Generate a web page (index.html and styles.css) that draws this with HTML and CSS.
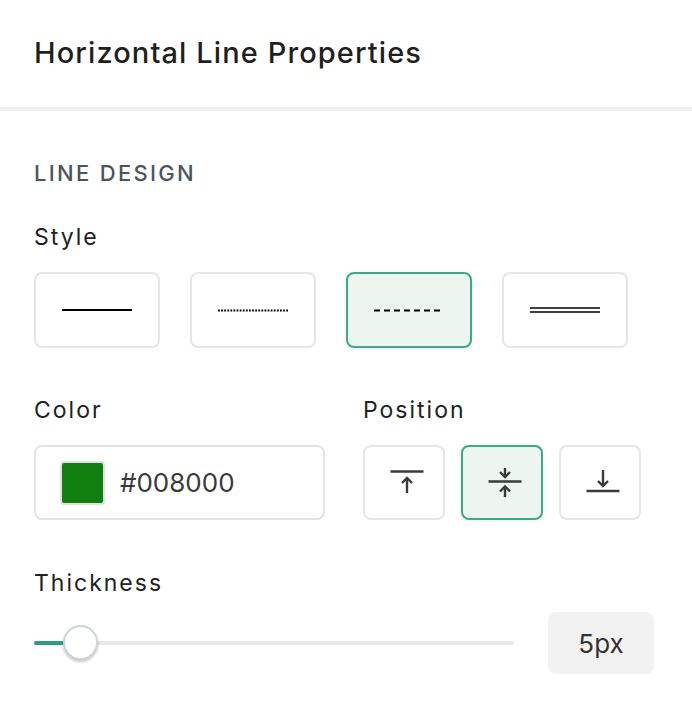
FILE: index.html
```html
<!DOCTYPE html>
<html lang="en">
<head>
<meta charset="utf-8">
<title>Horizontal Line Properties</title>
<link rel="stylesheet" href="styles.css">
</head>
<body>
<div class="panel">
  <header class="panel-header">
    <h1 class="panel-title">Horizontal Line Properties</h1>
  </header>
  <section class="panel-body">
    <h2 class="section-title">LINE DESIGN</h2>

    <div class="field field-style">
      <div class="label">Style</div>
      <div class="style-options">
        <button class="opt style-opt" aria-label="Solid">
          <svg width="70" height="8" viewBox="0 0 70 8"><line x1="0" y1="3" x2="70" y2="3" stroke="#000" stroke-width="2"/></svg>
        </button>
        <button class="opt style-opt" aria-label="Dotted">
          <svg width="70" height="8" viewBox="0 0 70 8"><line x1="0" y1="3.5" x2="70" y2="3.5" stroke="#000" stroke-width="2" stroke-dasharray="1.8 1.3"/></svg>
        </button>
        <button class="opt style-opt is-active" aria-label="Dashed">
          <svg width="70" height="8" viewBox="0 0 70 8"><line x1="0" y1="3.5" x2="70" y2="3.5" stroke="#000" stroke-width="2" stroke-dasharray="6 4"/></svg>
        </button>
        <button class="opt style-opt" aria-label="Double">
          <svg width="70" height="8" viewBox="0 0 70 8"><line x1="0" y1="1" x2="70" y2="1" stroke="#000" stroke-width="1.7"/><line x1="0" y1="5" x2="70" y2="5" stroke="#000" stroke-width="1.7"/></svg>
        </button>
      </div>
    </div>

    <div class="field-row">
      <div class="field">
        <div class="label">Color</div>
        <div class="color-input">
          <span class="swatch"></span>
          <span class="color-value">#008000</span>
        </div>
      </div>
      <div class="field">
        <div class="label">Position</div>
        <div class="pos-options">
          <button class="opt pos-opt" aria-label="Top">
            <svg width="40" height="40" viewBox="0 0 40 40" fill="none" stroke="#3a3a3a" stroke-width="2.4" stroke-linecap="butt">
              <path d="M3.5 8.5H36.5"/>
              <path d="M20 15V30"/>
              <path d="M15 20L20 15L25 20"/>
            </svg>
          </button>
          <button class="opt pos-opt is-active" aria-label="Middle">
            <svg width="40" height="40" viewBox="0 0 40 40" fill="none" stroke="#3a3a3a" stroke-width="2.4" stroke-linecap="butt">
              <path d="M20 5V14"/>
              <path d="M15 9L20 14L25 9"/>
              <path d="M3.5 18.5H36.5"/>
              <path d="M20 23.5V34"/>
              <path d="M15 28.5L20 23.5L25 28.5"/>
            </svg>
          </button>
          <button class="opt pos-opt" aria-label="Bottom">
            <svg width="40" height="40" viewBox="0 0 40 40" fill="none" stroke="#3a3a3a" stroke-width="2.4" stroke-linecap="butt">
              <path d="M20 7V23"/>
              <path d="M15 18L20 23L25 18"/>
              <path d="M3.5 28H36.5"/>
            </svg>
          </button>
        </div>
      </div>
    </div>

    <div class="field field-thickness">
      <div class="label">Thickness</div>
      <div class="slider-row">
        <div class="slider">
          <div class="slider-track"><div class="slider-fill"></div></div>
          <div class="slider-thumb"></div>
        </div>
        <div class="value-box">5px</div>
      </div>
    </div>
  </section>
</div>
</body>
</html>
```

FILE: styles.css
```css
* { box-sizing: border-box; }

html, body {
  margin: 0;
  padding: 0;
  background: #fff;
}

body {
  font-family: Inter, "Noto Sans", "Liberation Sans", sans-serif;
  color: #222;
}

.panel {
  width: 692px;
}

.panel-header {
  padding: 36px 34px 37px;
  border-bottom: 4px solid #efefef;
}

.panel-title {
  margin: 0;
  font-size: 29px;
  line-height: 34px;
  font-weight: 500;
  letter-spacing: 1.1px;
  color: #1f1f1f;
}

.panel-body {
  padding: 49px 38px 0 34px;
}

.section-title {
  margin: 0;
  font-size: 22px;
  line-height: 26px;
  font-weight: 500;
  letter-spacing: 2.3px;
  color: #4b5560;
}

.label {
  font-size: 23px;
  line-height: 26px;
  font-weight: 400;
  letter-spacing: 2px;
  color: #222;
}

.field-style {
  margin-top: 38px;
}

.field-style .label {
  margin-bottom: 22px;
}

.style-options {
  display: flex;
  gap: 30px;
}

.opt {
  display: flex;
  align-items: center;
  justify-content: center;
  padding: 0;
  margin: 0;
  background: #fff;
  border: 2px solid #e6e6e6;
  border-radius: 8px;
  cursor: pointer;
}

.opt svg { display: block; }

.opt.is-active {
  background: #ecf5f0;
  border-color: #3ea98a;
  box-shadow: 0 1px 4px rgba(0, 0, 0, 0.08);
}

.style-opt {
  width: 126px;
  height: 76px;
}

.style-opt svg {
  margin-top: 2px;
}

.field-row {
  display: grid;
  grid-template-columns: 1fr 1fr;
  column-gap: 38px;
  margin-top: 49px;
}

.field-row .label {
  margin-bottom: 22px;
}

.color-input {
  display: flex;
  align-items: center;
  gap: 15px;
  height: 75px;
  padding: 0 24px;
  border: 2px solid #e3e3e3;
  border-radius: 8px;
}

.swatch {
  width: 45px;
  height: 44px;
  background: #107f10;
  border: 2px solid #e0e0e0;
  border-radius: 4px;
}

.color-value {
  font-size: 26px;
  color: #3a3a3a;
}

.pos-options {
  display: flex;
  gap: 16px;
}

.pos-opt {
  width: 82px;
  height: 75px;
  padding-left: 6px;
}

.field-thickness {
  margin-top: 50px;
}

.slider-row {
  display: flex;
  align-items: center;
  gap: 34px;
  margin-top: 16px;
}

.slider {
  position: relative;
  flex: 1;
  height: 36px;
  display: flex;
  align-items: center;
}

.slider-track {
  width: 100%;
  height: 4px;
  background: #e8e8e8;
  border-radius: 2px;
  overflow: hidden;
}

.slider-fill {
  width: 40px;
  height: 100%;
  background: #2b9e80;
}

.slider-thumb {
  position: absolute;
  left: 29px;
  top: 0;
  width: 35px;
  height: 35px;
  border-radius: 50%;
  background: #fff;
  border: 2px solid #cdd4dc;
  box-shadow: 0 2px 3px rgba(0, 0, 0, 0.22);
}

.value-box {
  width: 106px;
  height: 62px;
  display: flex;
  align-items: center;
  justify-content: center;
  background: #f2f2f2;
  border-radius: 8px;
  font-size: 26px;
  color: #333;
}
```
